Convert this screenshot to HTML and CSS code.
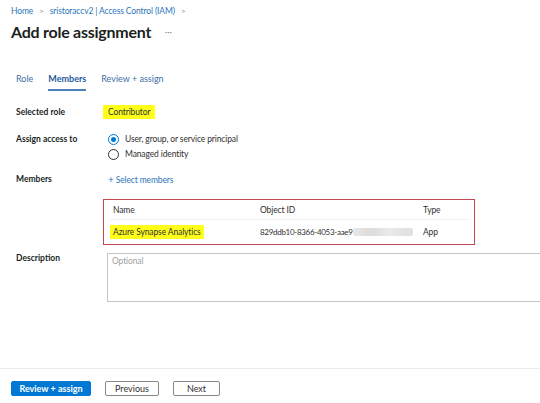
FILE: index.html
```html
<!DOCTYPE html>
<html>
<head>
<meta charset="utf-8">
<link rel="stylesheet" href="styles.css">
</head>
<body>
<div class="page">
  <header class="head">
    <nav class="crumbs">
      <a>Home</a><span class="sep">&gt;</span><a>sristoraccv2 | Access Control (IAM)</a><span class="sep">&gt;</span>
    </nav>
    <div class="title-row">
      <h1 class="title">Add role assignment</h1>
      <span class="more">···</span>
    </div>
  </header>

  <nav class="tabs">
    <span class="tab">Role</span>
    <span class="tab active">Members</span>
    <span class="tab">Review + assign</span>
  </nav>

  <div class="form">
    <div class="row row-role">
      <div class="label">Selected role</div>
      <div class="value"><span class="hl role-hl">Contributor</span></div>
    </div>
    <div class="row row-access">
      <div class="label">Assign access to</div>
      <div class="value radios">
        <label class="radio"><span class="dot checked"></span>User, group, or service principal</label>
        <label class="radio"><span class="dot"></span>Managed identity</label>
      </div>
    </div>
    <div class="row row-members">
      <div class="label">Members</div>
      <div class="value"><a class="add"><span class="plus">+</span> Select members</a></div>
    </div>
    <div class="row row-table">
      <div class="label"></div>
      <div class="value">
        <div class="tbl">
          <div class="tr th">
            <span class="c1">Name</span><span class="c2">Object ID</span><span class="c3">Type</span>
          </div>
          <div class="tr td">
            <span class="c1"><span class="hl name-hl">Azure Synapse Analytics</span></span><span class="c2"><span class="oid">829ddb10-8366-4053-aae9</span><span class="blur"></span></span><span class="c3">App</span>
          </div>
        </div>
      </div>
    </div>
    <div class="row row-desc">
      <div class="label">Description</div>
      <div class="value"><div class="textarea">Optional</div></div>
    </div>
  </div>

  <footer class="foot">
    <button class="btn primary">Review + assign</button>
    <button class="btn">Previous</button>
    <button class="btn">Next</button>
  </footer>
</div>
</body>
</html>
```

FILE: styles.css
```css
* { box-sizing: border-box; }
html, body { margin: 0; padding: 0; background: #fff; }
body {
  width: 540px;
  height: 403px;
  overflow: hidden;
  font-family: "Lato", "Noto Sans", sans-serif;
  font-size: 8.5px;
  letter-spacing: -0.12px;
  color: #323130;
}
.page { display: flex; flex-direction: column; height: 403px; }

.head { padding: 4px 0 0 11px; }
.crumbs { display: flex; align-items: center; font-size: 8.5px; height: 13px; white-space: nowrap; }
.crumbs a { color: #2b76b9; }
.crumbs .sep { color: #8a8886; margin: 0 6px; font-size: 8px; }
.title-row { display: flex; align-items: center; margin-top: 3px; height: 22px; }
.title { margin: 0; font-size: 16px; font-weight: 700; color: #201f1e; letter-spacing: -0.25px; }
.more { margin-left: 14px; color: #8a8886; font-size: 9px; }

.tabs { display: flex; gap: 15px; padding-left: 16px; margin-top: 29px; height: 20px; white-space: nowrap; }
.tab { color: #3f6fa5; font-size: 9px; line-height: 16px; letter-spacing: 0; }
.tab.active { color: #1e5a9c; font-weight: 700; border-bottom: 2px solid #4f80b5; }

.form { padding-left: 16px; margin-top: 14px; white-space: nowrap; }
.row { display: grid; grid-template-columns: 87px 1fr; }
.label { font-weight: 700; color: #201f1e; font-size: 8.5px; letter-spacing: 0; }
.row-role { height: 14px; align-items: center; }
.hl { background: #ffff1a; }
.role-hl { display: inline-block; padding: 2px 5px; line-height: 10px; }

.row-access { margin-top: 13px; }
.row-access .label { line-height: 14px; }
.radios { display: flex; flex-direction: column; gap: 1px; padding-left: 5px; }
.radio { display: flex; align-items: center; gap: 6px; height: 14px; }
.dot { width: 11px; height: 11px; border: 1px solid #323130; border-radius: 50%; display: inline-flex; align-items: center; justify-content: center; }
.dot.checked { border-color: #0078d4; }
.dot.checked::after { content: ""; width: 5px; height: 5px; border-radius: 50%; background: #0078d4; }

.row-members { margin-top: 11px; }
.row-members .label { line-height: 14px; }
.add { color: #2b76b9; padding-left: 5px; line-height: 14px; }
.plus { font-size: 10px; }

.row-table { margin-top: 12px; }
.tbl { width: 372px; height: 46px; border: 1.5px solid #c0474f; padding: 0 6px; }
.tr { display: flex; align-items: center; }
.th { height: 20px; border-bottom: 1px solid #efefef; padding-top: 1px; }
.td { height: 23px; }
.c1 { width: 150px; padding-left: 3px; }
.td .c1 { padding-left: 0; }
.c2 { width: 163px; display: flex; align-items: center; }
.c3 { flex: 1; }
.oid { font-size: 8px; letter-spacing: -0.3px; }
.name-hl { padding: 2px 3px; }
.blur { display: inline-block; width: 60px; height: 8px; margin-left: 0; background: linear-gradient(90deg, #e4e4e4, #d6d6d6 30%, #e6e6e6 60%, #dadada); border-radius: 2px; opacity: 0.85; }

.row-desc { margin-top: 6px; }
.row-desc .label { padding-top: 1px; line-height: 12px; }
.textarea { margin: 2px 0 0 4px; width: 460px; height: 49px; border: 1px solid #c8c6c4; color: #a19f9d; padding: 2px 4px; font-size: 8.5px; }

.foot { margin-top: auto; margin-bottom: 8px; border-top: 1px solid #edebe9; padding: 12px 0 0 11px; display: flex; gap: 14px; height: 27px; }
.btn { font-family: inherit; font-size: 9px; height: 15px; padding: 0; border: 1px solid #8a8886; background: #fff; color: #323130; border-radius: 2px; width: 54px; line-height: 13px; }
.btn.primary { width: 80px; background: #0078d4; border-color: #0078d4; color: #fff; font-weight: 700; }
.btn:last-child { width: 47px; }
```
